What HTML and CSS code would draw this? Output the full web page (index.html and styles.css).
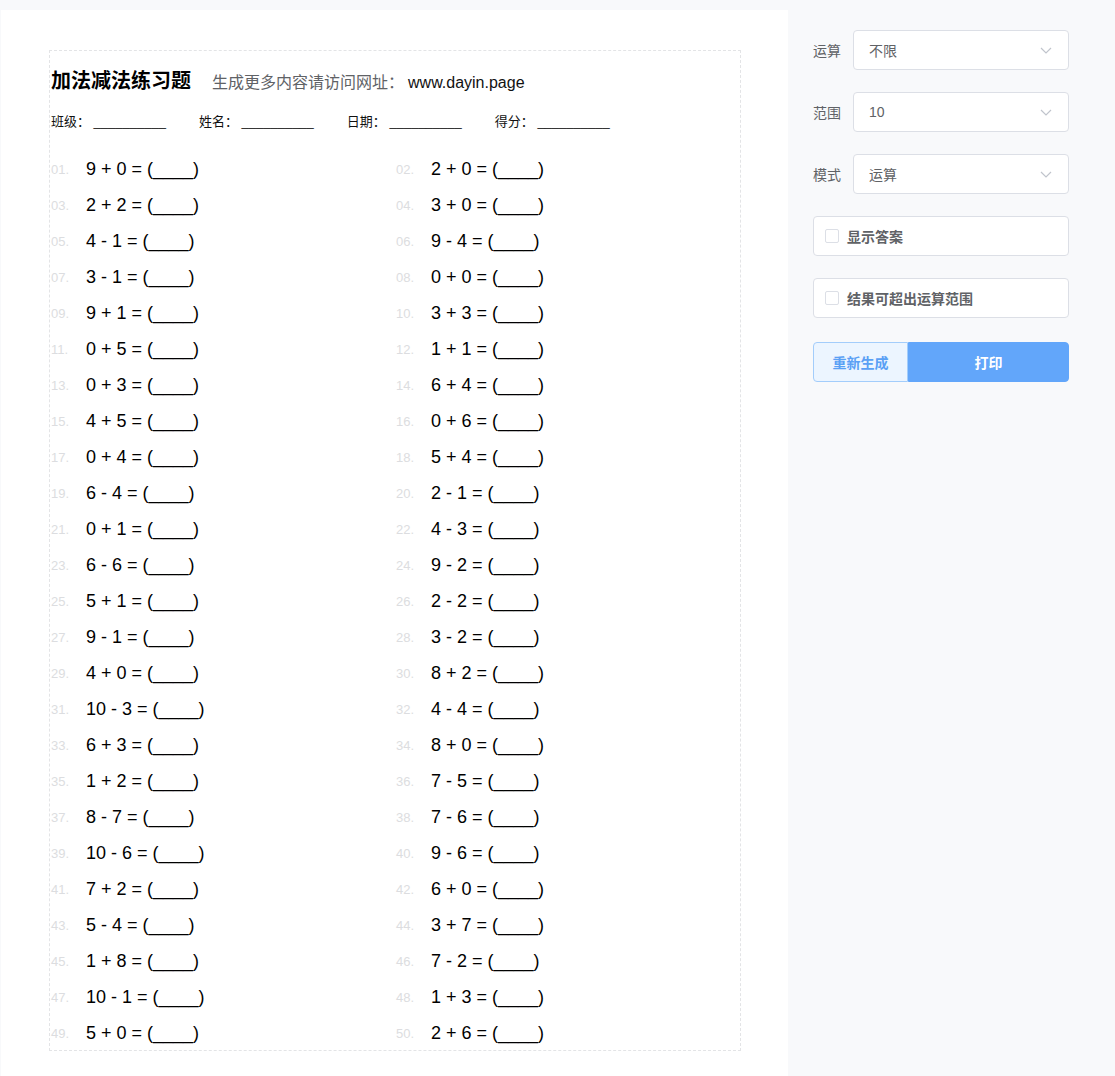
FILE: index.html
```html
<!DOCTYPE html>
<html lang="zh-CN">
<head>
<meta charset="utf-8">
<title>加法减法练习题</title>
<link rel="stylesheet" href="styles.css">
</head>
<body>
<div class="app">
  <main class="paper">
    <section class="sheet">
      <header class="head">
        <h1 class="title">加法减法练习题</h1>
        <span class="sub">生成更多内容请访问网址：</span>
        <span class="url">www.dayin.page</span>
      </header>
      <div class="info">
        <span class="field">班级： __________</span>
        <span class="field">姓名： __________</span>
        <span class="field">日期： __________</span>
        <span class="field">得分： __________</span>
      </div>
      <ol class="grid">
        <li class="item"><span class="no">01.</span><span class="exp">9 + 0 = (____)</span></li>
        <li class="item"><span class="no">02.</span><span class="exp">2 + 0 = (____)</span></li>
        <li class="item"><span class="no">03.</span><span class="exp">2 + 2 = (____)</span></li>
        <li class="item"><span class="no">04.</span><span class="exp">3 + 0 = (____)</span></li>
        <li class="item"><span class="no">05.</span><span class="exp">4 - 1 = (____)</span></li>
        <li class="item"><span class="no">06.</span><span class="exp">9 - 4 = (____)</span></li>
        <li class="item"><span class="no">07.</span><span class="exp">3 - 1 = (____)</span></li>
        <li class="item"><span class="no">08.</span><span class="exp">0 + 0 = (____)</span></li>
        <li class="item"><span class="no">09.</span><span class="exp">9 + 1 = (____)</span></li>
        <li class="item"><span class="no">10.</span><span class="exp">3 + 3 = (____)</span></li>
        <li class="item"><span class="no">11.</span><span class="exp">0 + 5 = (____)</span></li>
        <li class="item"><span class="no">12.</span><span class="exp">1 + 1 = (____)</span></li>
        <li class="item"><span class="no">13.</span><span class="exp">0 + 3 = (____)</span></li>
        <li class="item"><span class="no">14.</span><span class="exp">6 + 4 = (____)</span></li>
        <li class="item"><span class="no">15.</span><span class="exp">4 + 5 = (____)</span></li>
        <li class="item"><span class="no">16.</span><span class="exp">0 + 6 = (____)</span></li>
        <li class="item"><span class="no">17.</span><span class="exp">0 + 4 = (____)</span></li>
        <li class="item"><span class="no">18.</span><span class="exp">5 + 4 = (____)</span></li>
        <li class="item"><span class="no">19.</span><span class="exp">6 - 4 = (____)</span></li>
        <li class="item"><span class="no">20.</span><span class="exp">2 - 1 = (____)</span></li>
        <li class="item"><span class="no">21.</span><span class="exp">0 + 1 = (____)</span></li>
        <li class="item"><span class="no">22.</span><span class="exp">4 - 3 = (____)</span></li>
        <li class="item"><span class="no">23.</span><span class="exp">6 - 6 = (____)</span></li>
        <li class="item"><span class="no">24.</span><span class="exp">9 - 2 = (____)</span></li>
        <li class="item"><span class="no">25.</span><span class="exp">5 + 1 = (____)</span></li>
        <li class="item"><span class="no">26.</span><span class="exp">2 - 2 = (____)</span></li>
        <li class="item"><span class="no">27.</span><span class="exp">9 - 1 = (____)</span></li>
        <li class="item"><span class="no">28.</span><span class="exp">3 - 2 = (____)</span></li>
        <li class="item"><span class="no">29.</span><span class="exp">4 + 0 = (____)</span></li>
        <li class="item"><span class="no">30.</span><span class="exp">8 + 2 = (____)</span></li>
        <li class="item"><span class="no">31.</span><span class="exp">10 - 3 = (____)</span></li>
        <li class="item"><span class="no">32.</span><span class="exp">4 - 4 = (____)</span></li>
        <li class="item"><span class="no">33.</span><span class="exp">6 + 3 = (____)</span></li>
        <li class="item"><span class="no">34.</span><span class="exp">8 + 0 = (____)</span></li>
        <li class="item"><span class="no">35.</span><span class="exp">1 + 2 = (____)</span></li>
        <li class="item"><span class="no">36.</span><span class="exp">7 - 5 = (____)</span></li>
        <li class="item"><span class="no">37.</span><span class="exp">8 - 7 = (____)</span></li>
        <li class="item"><span class="no">38.</span><span class="exp">7 - 6 = (____)</span></li>
        <li class="item"><span class="no">39.</span><span class="exp">10 - 6 = (____)</span></li>
        <li class="item"><span class="no">40.</span><span class="exp">9 - 6 = (____)</span></li>
        <li class="item"><span class="no">41.</span><span class="exp">7 + 2 = (____)</span></li>
        <li class="item"><span class="no">42.</span><span class="exp">6 + 0 = (____)</span></li>
        <li class="item"><span class="no">43.</span><span class="exp">5 - 4 = (____)</span></li>
        <li class="item"><span class="no">44.</span><span class="exp">3 + 7 = (____)</span></li>
        <li class="item"><span class="no">45.</span><span class="exp">1 + 8 = (____)</span></li>
        <li class="item"><span class="no">46.</span><span class="exp">7 - 2 = (____)</span></li>
        <li class="item"><span class="no">47.</span><span class="exp">10 - 1 = (____)</span></li>
        <li class="item"><span class="no">48.</span><span class="exp">1 + 3 = (____)</span></li>
        <li class="item"><span class="no">49.</span><span class="exp">5 + 0 = (____)</span></li>
        <li class="item"><span class="no">50.</span><span class="exp">2 + 6 = (____)</span></li>
      </ol>
    </section>
  </main>
  <aside class="side">
    <div class="form-row">
      <label class="label">运算</label>
      <div class="select"><span class="val">不限</span><svg class="chev" width="12" height="7" viewBox="0 0 12 7"><polyline points="1,1 6,6 11,1" fill="none" stroke="#c0c4cc" stroke-width="1.2"/></svg></div>
    </div>
    <div class="form-row">
      <label class="label">范围</label>
      <div class="select"><span class="val">10</span><svg class="chev" width="12" height="7" viewBox="0 0 12 7"><polyline points="1,1 6,6 11,1" fill="none" stroke="#c0c4cc" stroke-width="1.2"/></svg></div>
    </div>
    <div class="form-row">
      <label class="label">模式</label>
      <div class="select"><span class="val">运算</span><svg class="chev" width="12" height="7" viewBox="0 0 12 7"><polyline points="1,1 6,6 11,1" fill="none" stroke="#c0c4cc" stroke-width="1.2"/></svg></div>
    </div>
    <div class="check"><span class="box"></span><span class="check-text">显示答案</span></div>
    <div class="check"><span class="box"></span><span class="check-text">结果可超出运算范围</span></div>
    <div class="btns">
      <button class="btn btn-plain">重新生成</button>
      <button class="btn btn-primary">打印</button>
    </div>
  </aside>
</div>
</body>
</html>
```
FILE: styles.css
```css
* { box-sizing: border-box; }
html, body { margin: 0; padding: 0; }
body {
  background: #f8f9fb;
  font-family: "Liberation Sans", "Noto Sans CJK SC", sans-serif;
  color: #000;
}
.app {
  display: flex;
  align-items: flex-start;
  min-height: 1076px;
}
.paper {
  width: 787px;
  margin-top: 10px;
  margin-left: 1px;
  min-height: 1066px;
  background: #fff;
  padding: 40px 47px 0 48px;
}
.sheet {
  border: 1px dashed #e3e4e6;
  padding: 14px 0 0 1px;
  height: 1001px;
}
.head {
  display: flex;
  align-items: baseline;
  height: 30px;
  line-height: 30px;
}
.title {
  margin: 0 21px 0 0;
  font-size: 20px;
  font-weight: 700;
  font-family: "Noto Sans CJK SC", sans-serif;
  color: #000;
}
.sub {
  font-size: 16px;
  color: #606266;
  font-family: "Noto Sans CJK SC", sans-serif;
}
.url {
  font-size: 16px;
  color: #111;
  margin-left: 4px;
}
.info {
  margin-top: 17px;
  height: 20px;
  line-height: 20px;
  font-size: 13px;
  color: #111;
  display: flex;
}
.field {
  margin-right: 33px;
  white-space: pre;
}
.grid {
  list-style: none;
  margin: 19px 0 0;
  padding: 0;
  display: grid;
  grid-template-columns: 345px 345px;
}
.item {
  height: 36px;
  display: flex;
  align-items: center;
}
.no {
  width: 35px;
  font-size: 13px;
  color: #dcdde0;
}
.exp {
  font-size: 18px;
  color: #000;
  white-space: pre;
}
.side {
  width: 327px;
  padding: 30px 46px 0 25px;
}
.form-row {
  display: flex;
  align-items: center;
  height: 40px;
  margin-bottom: 22px;
}
.label {
  width: 40px;
  font-size: 14px;
  color: #606266;
  font-family: "Noto Sans CJK SC", sans-serif;
}
.select {
  flex: 1;
  height: 40px;
  background: #fff;
  border: 1px solid #dcdfe6;
  border-radius: 4px;
  display: flex;
  align-items: center;
  justify-content: space-between;
  padding: 0 16px 0 15px;
}
.val {
  font-size: 14px;
  color: #606266;
  font-family: "Liberation Sans", "Noto Sans CJK SC", sans-serif;
}
.check {
  height: 40px;
  background: #fff;
  border: 1px solid #dcdfe6;
  border-radius: 4px;
  display: flex;
  align-items: center;
  padding-left: 11px;
  margin-bottom: 22px;
}
.box {
  width: 14px;
  height: 14px;
  border: 1px solid #dcdfe6;
  border-radius: 2px;
  background: #fff;
  margin-right: 8px;
}
.check-text {
  font-size: 14px;
  font-weight: 700;
  color: #606266;
  font-family: "Noto Sans CJK SC", sans-serif;
}
.btns {
  display: flex;
  height: 40px;
  margin-top: 24px;
}
.btn {
  height: 40px;
  font-size: 14px;
  font-weight: 700;
  font-family: "Noto Sans CJK SC", sans-serif;
  border: 1px solid;
  padding: 0;
  cursor: pointer;
}
.btn-plain {
  width: 95px;
  background: #ecf5ff;
  border-color: #a3cdfb;
  color: #5aa0f5;
  border-radius: 4px 0 0 4px;
}
.btn-primary {
  flex: 1;
  background: #62a6fa;
  border-color: #62a6fa;
  color: #fff;
  border-radius: 0 4px 4px 0;
}
```
